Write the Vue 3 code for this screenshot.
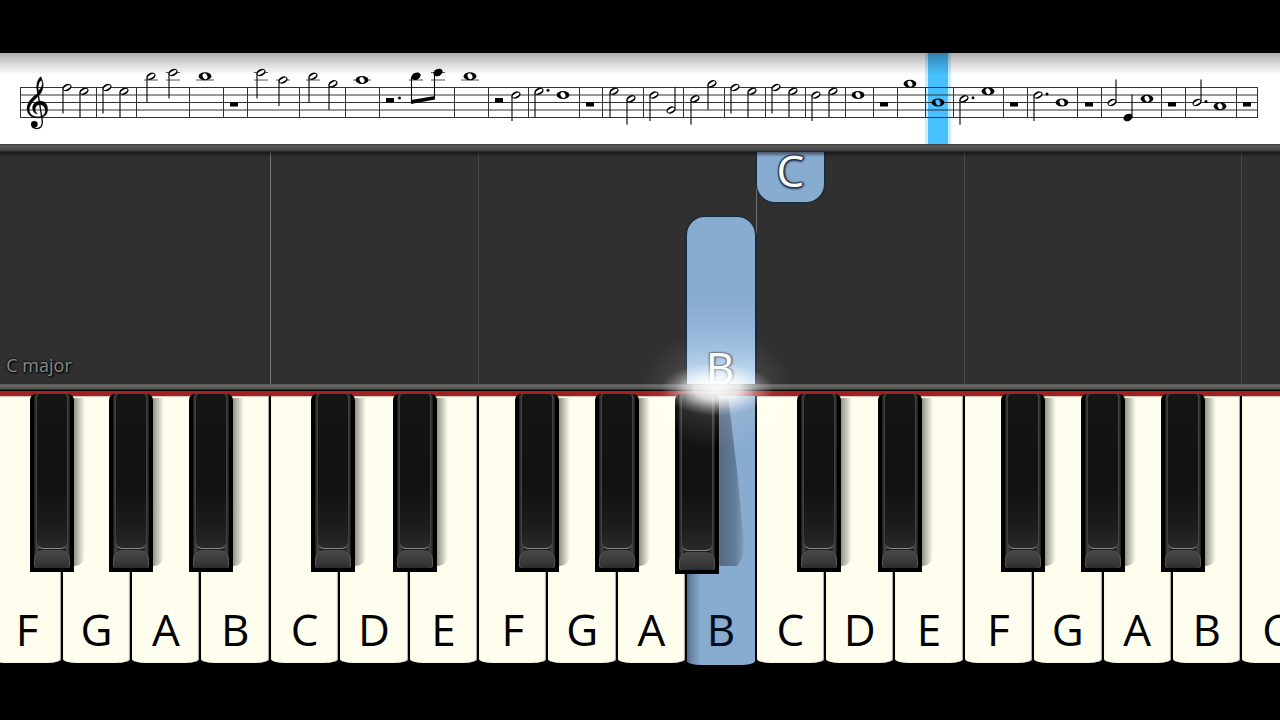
<script setup>
const BOTTOM_LINE = 64.5
const STEP = 3.75
const staffLines = [0, 2, 4, 6, 8].map((p) => BOTTOM_LINE - p * STEP)

const bars = [
  20.5, 96.5, 136.5, 189.5, 223.5, 247.5, 299.5, 345.5, 379.5, 454.5, 488.5, 528.5, 579.5, 602.5,
  643.5, 683.5, 724.5, 765.5, 805.5, 845.5, 873.5, 897.5, 925.5, 953.5, 1003.5, 1027.5, 1077.5,
  1101.5, 1161.5, 1185.5, 1236.5, 1257.5,
]

// [x, staff step above the bottom line, kind, dotted, stem up]
const raw = [
  [67, 8, 'half'], [84, 7, 'half'], [107, 8, 'half'], [124, 7, 'half'],
  [151, 11, 'half'], [173, 12, 'half'], [205, 11, 'whole'],
  [261, 12, 'half'], [283, 10, 'half'], [313, 11, 'half'], [333, 9, 'half'], [362, 10, 'whole'],
  [416, 11, 'beamed'], [438, 12, 'beamed'], [470, 11, 'whole'],
  [516, 6, 'half'], [539, 7, 'half', true], [563, 6, 'whole'],
  [614, 7, 'half'], [631, 5, 'half'], [654, 6, 'half'], [671, 2, 'half', false, true],
  [695, 5, 'half'], [712, 9, 'half'], [735, 8, 'half'], [752, 7, 'half'],
  [776, 8, 'half'], [793, 7, 'half'], [816, 6, 'half'], [833, 7, 'half'], [858, 6, 'whole'],
  [910, 9, 'whole'], [938, 4, 'whole'],
  [964, 5, 'half', true], [988, 7, 'whole'], [1038, 6, 'half', true], [1062, 4, 'whole'],
  [1112, 4, 'half', false, true], [1128, 0, 'quarter', false, true], [1147, 5, 'whole'],
  [1197, 4, 'half', true, true], [1220, 3, 'whole'],
]

const notes = raw.map(([x, p, kind, dotted, up]) => {
  const y = BOTTOM_LINE - p * STEP
  const ledgers = []
  for (let l = 10; l <= p; l += 2) ledgers.push(BOTTOM_LINE - l * STEP)
  const stem = kind === 'whole' || kind === 'beamed'
    ? null
    : up
      ? { x: x + 4, y1: y - 1, y2: y - 23 }
      : { x: x - 4, y1: y + 1, y2: y + 26 }
  return { x, y, kind, dotted, ledgers, stem, half: kind === 'whole' ? 9 : 7 }
})

const rests = [
  [234, 49], [390, 45], [499, 45], [590, 49], [884, 49], [1014, 49],
  [1089, 49], [1172, 49], [1247, 49],
]

const names = 'F G A B C D E F G A B C D E F G A B C'.split(' ')
const keys = names.map((name, i) => ({
  id: i,
  name,
  sharp: 'CDFGA'.includes(name) && i < 18,
  active: i === 10,
  low: i === 9,
}))
</script>

<template>
  <main class="player">
    <section class="score" aria-label="Score">
      <svg class="sheet" viewBox="0 0 1280 91">
        <rect x="925" y="0" width="26" height="91" fill="#c9edfb" />
        <rect x="928" y="0" width="20" height="91" fill="#48bfff" />
        <g stroke="#333" stroke-width="1">
          <line v-for="y in staffLines" :key="y" x1="20" x2="1258" :y1="y" :y2="y" />
          <line v-for="x in bars" :key="x" :x1="x" :x2="x" y1="34.5" y2="64.5" />
        </g>
        <g transform="translate(0 -8) scale(.3333)" fill="none" stroke="#000" stroke-linecap="round">
          <circle cx="103" cy="238" r="10" fill="#000" stroke="none" />
          <path d="M97 246Q112 256 123 245Q129 237 126 222L113 137Q110 108 123 98" stroke-width="4" />
          <path d="M121 96C107 110 108 133 114 145C91 160 81 175 81 191C81 209 96 219 113 219C133 219 143 208 143 192C143 178 134 168 120 168C105 168 96 180 98 192C99 201 106 207 113 207C101 199 104 179 119 179C130 179 136 187 136 197C136 208 127 215 114 215C99 215 88 208 88 194C88 177 107 161 119 149C132 134 134 109 121 96ZM124 106C132 116 122 133 115 138C112 124 116 111 124 106Z" fill="#000" fill-rule="evenodd" stroke="#000" stroke-width="1" />
        </g>
        <g v-for="n in notes" :key="n.x">
          <line v-for="l in n.ledgers" :key="l" :x1="n.x - n.half" :x2="n.x + n.half" :y1="l" :y2="l" stroke="#555" stroke-width="1" />
          <line v-if="n.stem" :x1="n.stem.x" :x2="n.stem.x" :y1="n.stem.y1" :y2="n.stem.y2" stroke="#000" stroke-width="1.1" />
          <g :transform="`translate(${n.x} ${n.y})`">
            <template v-if="n.kind === 'whole'">
              <ellipse rx="6.4" ry="4" />
              <ellipse rx="2.3" ry="3.1" fill="#fff" transform="rotate(-25)" :class="{ played: n.x === 938 }" />
            </template>
            <template v-else-if="n.kind === 'half'">
              <ellipse rx="4.8" ry="3.4" transform="rotate(-25)" />
              <ellipse rx="3.8" ry="1.6" fill="#fff" transform="rotate(-32)" />
            </template>
            <ellipse v-else rx="4.8" ry="3.5" transform="rotate(-25)" />
            <circle v-if="n.dotted" cx="9" cy="-1" r="1.5" />
          </g>
        </g>
        <path d="M411.5 24V50M434.5 21V46" stroke="#000" stroke-width="1.1" />
        <path d="M411 47L435 43V46.5L411 51Z" />
        <rect v-for="[x, y] in rests" :key="x" :x="x - 4" :y="y" width="8" height="4.5" />
        <circle cx="399.5" cy="45" r="1.5" />
      </svg>
    </section>
    <div class="rail upper"></div>

    <section class="roll" aria-label="Falling notes">
      <div v-for="k in keys" :key="k.id" class="lane" :class="{ f: k.name === 'F', c: k.name === 'C', first: k.id === 4, covered: k.id === 11 }">
        <div v-if="k.id === 10" class="note current"><span>B</span></div>
        <div v-if="k.id === 11" class="note next"><span>C</span></div>
      </div>
      <p class="scale">C major</p>
    </section>
    <div class="rail lower"></div>

    <section class="keyboard" aria-label="Keyboard">
      <div v-for="k in keys" :key="k.id" class="cell">
        <button type="button" class="white" :class="{ active: k.active }">{{ k.name }}</button>
        <button v-if="k.sharp" type="button" class="black" :class="[`s${k.name}`, { low: k.low }]" :aria-label="`${k.name} sharp`">
          <span class="body">
            <span class="face"></span>
            <span class="cap"></span>
          </span>
        </button>
        <div v-if="k.active" class="glow"></div>
      </div>
    </section>
  </main>
</template>

<style>
body {
  background: #000;
}
</style>

<style scoped>
.player {
  min-height: 100vh;
  box-sizing: border-box;
  padding-top: 53px;
  background: #000;
  overflow: hidden;
  font-family: "Open Sans", "Noto Sans", sans-serif;
}
.score {
  background: #fff;
  position: relative;
}
.score::after {
  content: "";
  position: absolute;
  inset: 0 0 auto;
  height: 22px;
  background: linear-gradient(rgba(0, 0, 0, 0.32), rgba(0, 0, 0, 0.16) 45%, transparent);
}
.sheet {
  display: block;
  width: 100%;
}
.played {
  fill: #48bfff;
}
.rail {
  height: 7px;
  background: linear-gradient(#3a3a3a, #5a5a5a 30%, #444 80%, #1c1c1c);
}
.upper {
  height: 8px;
}
.lower {
  background: linear-gradient(#505050, #6a6a68 20%, #4c4c4a 75%, #000 85%);
}
.roll,
.keyboard {
  display: grid;
  grid-template-columns: repeat(19, 1fr);
  width: 103%;
  margin-left: -0.6%;
}
.roll {
  position: relative;
  height: 232px;
  background: #303030;
  overflow: hidden;
}
.roll::before {
  content: "";
  position: absolute;
  inset: 0 0 auto;
  height: 5px;
  z-index: 2;
  background: linear-gradient(rgba(0, 0, 0, 0.5), transparent);
}
.lane {
  position: relative;
  border-left: 1px solid transparent;
}
.lane.f,
.lane.c {
  border-left-color: #484848;
}
.lane.first {
  border-left-color: #787878;
}
.lane.covered {
  border-image: linear-gradient(#707070 34%, #182838 36%) 1;
}
.note {
  position: absolute;
  left: 0;
  right: 1px;
  box-sizing: border-box;
  display: flex;
  justify-content: center;
  align-items: flex-end;
  background: #88abd0;
  box-shadow: 0 0 0 1px #172a3d, 0 0 3px #14202c;
  color: #fff;
  font-size: 44px;
  line-height: 60px;
  text-shadow: -1px -1px 1px #26394d, 1px -1px 1px #26394d, -1px 1px 1px #26394d, 1px 1px 1px #26394d, 0 2px 2px #26394d, 2px 0 2px #26394d;
}
.current {
  top: 65px;
  bottom: 0;
  padding-right: 2px;
  border-radius: 18px 18px 0 0;
  background: linear-gradient(#88abd0 50%, #9dbedf 80%, #c4dcf2);
  text-shadow: -1px -1px 1px #667788, 1px -1px 1px #667788, -1px 1px 1px #667788, 1px 1px 1px #667788, 2px 0 2px #667788;
}
.current span {
  margin-bottom: -13px;
}
.next {
  top: -80px;
  height: 130px;
  padding-bottom: 2px;
  border-radius: 18px;
}
.scale {
  position: absolute;
  left: 14px;
  bottom: 5px;
  margin: 0;
  color: #888;
  font-size: 18px;
  line-height: 28px;
  text-shadow: 0 0 3px #000, 1px 1px 2px #000;
}
.keyboard {
  border-top: 5px solid #a31f20;
  background: #000;
}
.cell {
  position: relative;
  padding: 0 1px;
}
button {
  display: block;
  border: 0;
  padding: 0;
  font-family: inherit;
  color: #000;
}
.white {
  width: 100%;
  height: 267px;
  padding: 200px 0 1px;
  border-radius: 0 0 14px 14px / 0 0 4px 4px;
  background: #fffeee;
  box-shadow: inset -1px 0 1px #aaa89a, inset 0 1px 1px #c8c6b8;
  font-size: 44px;
  line-height: 66px;
}
.white.active {
  height: 269px;
  padding-bottom: 3px;
  margin-bottom: -2px;
  color: #020c1c;
  background:
    linear-gradient(90deg, #536a8c, rgba(90, 115, 150, 0.6) 8%, transparent 20%),
    #88abd0;
  box-shadow: none;
}
.black {
  position: absolute;
  z-index: 2;
  top: -2px;
  width: 44px;
  height: 178px;
  border-radius: 6px 6px 0 0;
  background: #000;
}
.sF {
  right: -12px;
}
.sG {
  right: -22px;
}
.sA {
  right: -33px;
}
.sC {
  right: -16px;
}
.sD {
  right: -28px;
}
.black::before {
  content: "";
  position: absolute;
  left: 44px;
  top: 4px;
  width: 11px;
  height: 168px;
  border-radius: 0 0 10px 0;
  background: linear-gradient(90deg, rgba(60, 60, 50, 0.55), rgba(60, 60, 50, 0.25) 55%, transparent);
}
.low {
  height: 180px;
}
.low::before {
  width: 26px;
  border-radius: 0;
  background: linear-gradient(90deg, rgba(60, 70, 85, 0.65), rgba(60, 75, 95, 0.5) 60%, rgba(60, 75, 95, 0.1));
  clip-path: polygon(0 0, 35% 0, 70% 45%, 94% 85%, 90% 95%, 70% 100%, 0 100%);
}
.body {
  position: absolute;
  inset: 0 4px 4px;
  border-radius: 4px;
  background: linear-gradient(90deg, #171717, #474745 8%, #1c1c1c 16%, #1c1c1c 84%, #474745 92%, #171717);
}
.face {
  position: absolute;
  inset: 0 3px 19px;
  border-bottom: 1px solid #8a8a8a;
  border-radius: 4px 4px 6px 6px;
  background: linear-gradient(#151515, #111 60%, #1c1c1c 85%, #292929);
}
.cap {
  position: absolute;
  inset: auto 0 0;
  height: 18px;
  border-radius: 10px 10px 3px 3px;
  background: linear-gradient(#484848, #383838 70%, #2c2c2c);
  box-shadow: inset 1px 0 #555, inset -1px 0 #555;
}
.glow {
  position: absolute;
  z-index: 3;
  left: -54px;
  top: -82px;
  width: 170px;
  height: 150px;
  pointer-events: none;
  background:
    radial-gradient(ellipse 56px 26px at 50% 50%, rgba(255, 255, 255, 0.95), rgba(255, 255, 255, 0.8) 40%, rgba(255, 255, 255, 0.25) 75%, transparent),
    radial-gradient(ellipse 76px 60px at 50% 50%, rgba(255, 255, 255, 0.4), rgba(255, 255, 255, 0.1) 50%, transparent);
}
</style>
